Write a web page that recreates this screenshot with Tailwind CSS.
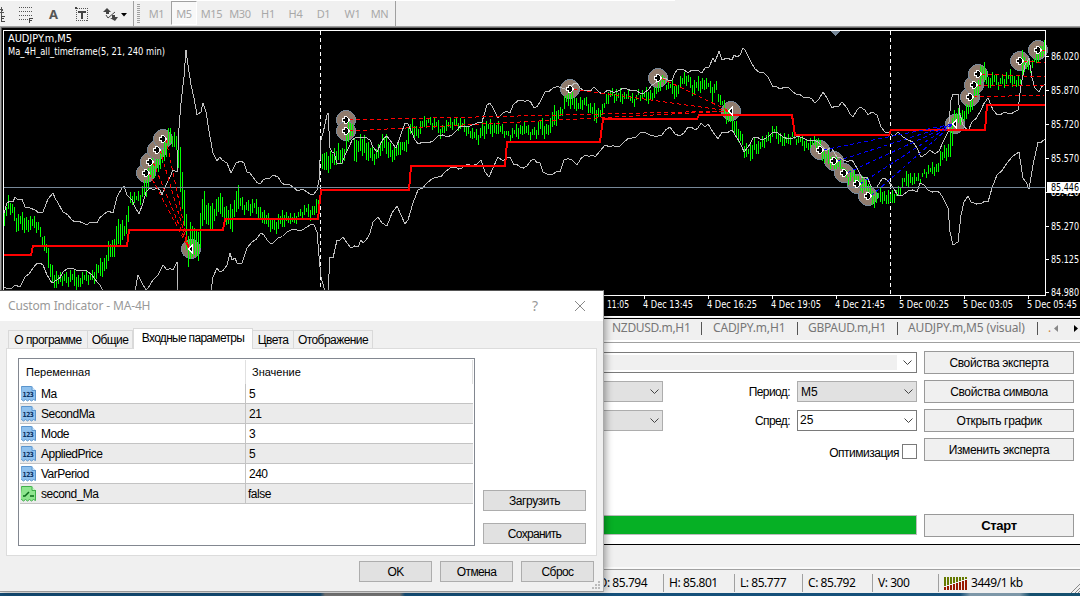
<!DOCTYPE html>
<html lang="ru">

<head>
    <meta charset="UTF-8" />
    <meta name="viewport" content="width=device-width, initial-scale=1.0" />
    <title>AUDJPY.m,M5</title>
    <script src="https://cdn.jsdelivr.net/npm/@tailwindcss/browser@4"></script>
</head>

<body class="relative w-[1080px] h-[596px] overflow-hidden flex flex-col bg-[#f0f0f0] text-black font-['Liberation_Sans',sans-serif] text-[11px] leading-none whitespace-nowrap">

    <!-- Toolbar -->
    <div class="h-[26px] shrink-0 flex items-center bg-[linear-gradient(90deg,#fff_675px,#f0f0f0_675px)] bg-[length:100%_1px] bg-no-repeat">
        <svg class="shrink-0" width="133" height="26" viewBox="0 0 133 26" shape-rendering="crispEdges">
            <path d="M0 9h3l-2 3h3M1 7v9" stroke="#555" fill="none" />
            <path d="M1 16.500h4M1 18.500h3M1 21.500h4M1.500 16v6" stroke="#444" fill="none" />
            <path d="M19 7.500h14M19 11.500h14M19 15.500h14M19 19.500h9" stroke="#555" stroke-dasharray="1 1" />
            <path d="M29.500 23v-5M29 18.500h4M29 20.500h3" stroke="#444" fill="none" />
            <rect x="76.500" y="8.500" width="11" height="12" fill="none" stroke="#555" stroke-dasharray="1 1" />
            <path d="M75 7h2v2h-2z" fill="#444" />
            <path d="M78 11.500h8M82 11v8" stroke="#444" stroke-width="2" />
            <g fill="#444" shape-rendering="auto">
                <path d="M107 8l4 4h-2v2h-3v-2h-3zM115 21l-5-3h2v-3h3v2h3z" />
                <path d="M106 15l2 3 7-6" stroke="#444" fill="none" />
                <path d="M121 13h6l-3 3.500z" fill="#000" />
            </g>
            <text x="49" y="19" font-size="13" font-weight="bold" fill="#555" font-family="Noto Sans">A</text>
        </svg>
        <div class="w-px h-[25px] bg-[#a0a0a0]"></div>
        <div class="ml-[3px] w-[3px] h-[19px] bg-[repeating-linear-gradient(#a0a0a0_0_1px,#f0f0f0_1px_2px)]"></div>
        <div class="ml-[2px] flex items-center text-[11px] font-['Noto_Sans',sans-serif] text-[#a8a8a8] tracking-[-0.3px]">
            <div class="w-[29px] pt-px text-center">M1</div>
            <div class="w-[26px] h-6 pt-px flex items-center justify-center border border-[#a0a0a0] border-r-white border-b-white bg-[#f8f8f8]">M5</div>
            <div class="w-[29px] pt-px text-center">M15</div>
            <div class="w-[28px] pt-px text-center">M30</div>
            <div class="w-[28px] pt-px text-center">H1</div>
            <div class="w-[27px] pt-px text-center">H4</div>
            <div class="w-[29px] pt-px text-center">D1</div>
            <div class="w-[29px] pt-px text-center">W1</div>
            <div class="w-[25px] pt-px text-center">MN</div>
        </div>
        <div class="ml-[3px] w-px h-[25px] bg-[#a0a0a0]"></div>
    </div>

    <!-- Chart -->
    <svg id="chart" class="shrink-0" width="1080" height="292" viewBox="0 26 1080 292" shape-rendering="crispEdges" font-family="DejaVu Sans Condensed, DejaVu Sans, sans-serif" font-size="10.500">
        <rect x="0" y="26" width="1080" height="292" fill="#000" />
        <path d="M0 26.500h1080" stroke="#a0a0a0" />
        <path d="M0 27.500h1080" stroke="#696969" />
        <path d="M0.500 27v290" stroke="#a0a0a0" />
        <path d="M1.500 28v289" stroke="#555" />
        <path d="M0 316.500h1080" stroke="#fff" />
        <path d="M0 317.500h1080" stroke="#f0f0f0" />
        <g id="rings" fill="#8f7b6d" stroke="#778899"></g>
        <path d="M320.500 31v264M890.500 31v264" stroke="#fff" stroke-dasharray="4 3" />
        <path id="bars" stroke="#00ff00" stroke-width="1" fill="none" />
        <path id="bands" stroke="#c0c0c0" fill="none" />
        <path d="M4 187.500h1041" stroke="#778899" />
        <path d="M4 255H31L33 246H127L129 230H223L225 219H318L321 190H409L411 166H505L507 142H600L603 119H697L699 115H792L795 135H889L891 130H985L987 105H1045" stroke="#f00" stroke-width="2" fill="none" />
        <path id="losses" stroke="#f00" stroke-dasharray="4 3" fill="none" />
        <path id="profits" stroke="#00f" stroke-dasharray="4 3" fill="none" />
        <g id="marks" fill="#000" stroke="#fff" stroke-width="1"></g>
        <path d="M831 31h9l-4.500 5z" fill="#778899" />
        <path d="M3.500 295V30.500H1045.500V295.500H3" stroke="#fff" fill="none" />
        <g fill="#fff" id="labels" shape-rendering="auto">
            <text x="8" y="42" textLength="64" lengthAdjust="spacingAndGlyphs">AUDJPY.m,M5</text>
            <text x="8" y="55" textLength="157" lengthAdjust="spacingAndGlyphs">Ma_4H_all_timeframe(5, 21, 240 min)</text>
            <text x="607" y="308" textLength="22" lengthAdjust="spacingAndGlyphs">11:05</text>
        </g>
    </svg>

    <!-- Chart tabs -->
    <div class="h-[24px] shrink-0 flex items-center border-t border-black bg-[#f0f0f0] pl-[612px] text-[12px] font-['Noto_Sans',sans-serif] text-[#777] shadow-[inset_0_-2px_0_#fff]">
        <div class="w-[78px] -mt-[5px] tracking-[-0.3px]">NZDUSD.m,H1</div>
        <div class="ml-[11px] -mt-1 w-px h-[13px] bg-[#555]"></div>
        <div class="ml-[11px] w-[74px] -mt-[5px] tracking-[-0.15px]">CADJPY.m,H1</div>
        <div class="ml-[10px] -mt-1 w-px h-[13px] bg-[#555]"></div>
        <div class="ml-[10px] w-[78px] -mt-[5px] tracking-[-0.3px]">GBPAUD.m,H1</div>
        <div class="ml-[11px] -mt-1 w-px h-[13px] bg-[#555]"></div>
        <div class="ml-[10px] w-[118px] -mt-[5px] tracking-[-0.15px]">AUDJPY.m,M5 (visual)</div>
        <div class="ml-[11px] -mt-1 w-px h-[13px] bg-[#555]"></div>
        <div class="ml-[10px] -mt-[5px] w-[6px] text-[#c84]">.</div>
        <svg class="-mt-[4px]" width="26" height="9" viewBox="0 0 26 9"><path d="M4 1v7l-4-3.500z" fill="#888" /><path d="M20 1v7l4-3.500z" fill="#000" /></svg>
    </div>

    <!-- Strategy tester -->
    <div class="h-[202px] shrink-0 flex border-t border-[#a0a0a0] bg-white text-[12px]">
        <div class="w-[917px] h-full flex flex-col pt-[9px]">
            <div class="h-[21px] border border-[#7a7a7a] flex items-center p-0.5">
                <div class="h-[15px] flex-1 bg-[#f0f0f0]"></div>
                <svg class="ml-1.5 mr-0.5" width="9" height="6" viewBox="0 0 9 6"><path d="M.5.5l4 4 4-4" stroke="#444" fill="none" /></svg>
            </div>
            <div class="mt-2 flex items-center">
                <div class="w-[663px] h-[21px] border border-[#adadad] bg-[#e1e1e1] flex items-center justify-end pr-[3px]">
                    <svg width="9" height="6" viewBox="0 0 9 6"><path d="M.5.5l4 4 4-4" stroke="#444" fill="none" /></svg>
                </div>
                <div class="flex-1 pr-[7px] text-right tracking-[-0.6px]">Период:</div>
                <div class="w-[120px] h-[21px] border border-[#adadad] bg-[#e1e1e1] flex items-center justify-between pl-[3px] pr-[3px]">M5
                    <svg width="9" height="6" viewBox="0 0 9 6"><path d="M.5.5l4 4 4-4" stroke="#444" fill="none" /></svg>
                </div>
            </div>
            <div class="mt-2 flex items-center">
                <div class="w-[663px] h-[21px] border border-[#adadad] bg-[#e1e1e1] flex items-center justify-end pr-[3px]">
                    <svg width="9" height="6" viewBox="0 0 9 6"><path d="M.5.5l4 4 4-4" stroke="#444" fill="none" /></svg>
                </div>
                <div class="flex-1 pr-[7px] text-right tracking-[-0.6px]">Спред:</div>
                <div class="w-[120px] h-[21px] border border-[#7a7a7a] bg-white flex items-center justify-between pl-0.5 pr-[3px]"><span class="-mt-0.5">25</span>
                    <svg width="9" height="6" viewBox="0 0 9 6"><path d="M.5.5l4 4 4-4" stroke="#444" fill="none" /></svg>
                </div>
            </div>
            <div class="mt-[12px] flex items-center justify-end">
                <span class="pt-1 pr-[3px] tracking-[-0.5px]">Оптимизация</span>
                <div class="w-[15px] h-[15px] border border-[#7a7a7a]"></div>
            </div>
            <div class="mt-[56px] h-[20px] border border-[#bcbcbc] bg-[#06b025]"></div>
        </div>
        <div class="ml-[7px] w-[150px] pt-2 flex flex-col gap-1.5 tracking-[-0.35px] [&>div]:h-[23px] [&>div]:border [&>div]:border-[#999] [&>div]:bg-[#f0f0f0] [&>div]:flex [&>div]:items-center [&>div]:justify-center">
            <div>Свойства эксперта</div>
            <div>Свойства символа</div>
            <div>Открыть график</div>
            <div>Изменить эксперта</div>
            <div class="mt-[47px] font-bold text-[13px]">Старт</div>
        </div>
    </div>
    <div class="h-[25px] shrink-0 border-t border-black bg-[#f0f0f0] shadow-[inset_0_-2px_0_#fafafa]"></div>

    <!-- Status bar -->
    <div class="h-[24px] shrink-0 flex items-center border-t border-[#a0a0a0] bg-[#f0f0f0] pl-[598px] pt-[3px] text-[12px] font-['Noto_Sans',sans-serif] tracking-[-0.45px]">
        <div class="w-[65px]">O: 85.794</div>
        <div class="w-[71px] h-[18px] flex items-center border-l border-[#a0a0a0] pl-[5px]">H: 85.801</div>
        <div class="w-[68px] h-[18px] flex items-center border-l border-[#a0a0a0] pl-[5px]">L: 85.777</div>
        <div class="w-[70px] h-[18px] flex items-center border-l border-[#a0a0a0] pl-[5px]">C: 85.792</div>
        <div class="w-[66px] h-[18px] flex items-center border-l border-[#a0a0a0] pl-[5px]">V: 300</div>
        <div class="flex-1 h-[18px] flex items-center border-l border-[#a0a0a0] pl-[5px]">
            <svg width="24" height="13" viewBox="0 0 24 13" shape-rendering="crispEdges">
                <path d="M1 0v9M4 0v8M7 0v7M10 0v6M13 0v5M16 0v4M19 0v3M22 0v2" stroke="#667a00" stroke-width="2" />
                <path d="M1 13v-3M4 13v-4M7 13v-5M10 13v-6M13 13v-7M16 13v-8M19 13v-9M22 13v-10" stroke="#991a00" stroke-width="2" />
            </svg>
            <span class="ml-[3px]">3449/1 kb</span>
        </div>
        <svg class="self-end" width="9" height="9" viewBox="0 0 9 9"><path d="M0 9l9-9M4 9l5-5M7 9l2-2" stroke="#888" /></svg>
    </div>
    <div class="h-[3px] bg-[linear-gradient(90deg,#134c75_0_320px,#777_325px_400px,#15507a_405px_960px,#7d97a8_970px_1020px,#15506f_1030px)]"></div>

    <!-- Indicator properties window -->
    <div class="absolute left-0 top-[290px] w-[604px] h-[302px] border border-l-0 border-[#555] border-b-[#999] border-r-[#aaa] bg-[#f0f0f0] shadow-[2px_0_7px_rgba(0,0,0,0.35)]">
        <div class="h-[30px] bg-white flex items-center pl-2 text-[#999] text-[12px] font-['Noto_Sans',sans-serif]">
            <div class="flex-1 tracking-[-0.15px]">Custom Indicator - MA-4H</div>
            <div class="text-[14px] w-[6px]">?</div>
            <svg class="ml-[36px] mr-[17px]" width="12" height="12" viewBox="0 0 12 12"><path d="M1 1l10 10M11 1l-10 10" stroke="#888" fill="none" /></svg>
        </div>
        <div class="mt-[7px] pl-2 h-[20px] flex items-end text-[12px] tracking-[-0.55px]">
            <div class="w-[80px] h-[18px] flex items-center justify-center border border-b-0 border-[#d9d9d9]">О программе</div>
            <div class="w-[45px] h-[18px] flex items-center justify-center border border-b-0 border-l-0 border-[#d9d9d9]">Общие</div>
            <div class="relative z-10 w-[120px] h-[21px] -mb-px pb-0.5 flex items-center justify-center border border-b-0 border-[#d9d9d9] bg-white tracking-[-0.7px]">Входные параметры</div>
            <div class="w-[41px] h-[18px] flex items-center justify-center border border-b-0 border-l-0 border-[#d9d9d9]">Цвета</div>
            <div class="w-[79px] h-[18px] flex items-center justify-center border border-b-0 border-l-0 border-[#d9d9d9]">Отображение</div>
        </div>
        <div class="ml-1.5 w-[591px] h-[208px] flex border border-[#dcdcdc] bg-white pl-[11px] pt-[9px]">
            <div class="w-[457px] h-[188px] border border-[#828790] px-px">
                <div class="h-[25px] pt-px flex">
                    <div class="w-[226px] h-6 flex items-center border-r border-[#e0e0e0] pl-[6px]">Переменная</div>
                    <div class="flex-1 h-6 flex items-center border-r border-[#e0e0e0] pl-[6px]">Значение</div>
                </div>
                <div id="params"></div>
            </div>
            <div class="ml-2 pt-[132px] flex flex-col gap-3 text-[12px]">
                <div class="w-[103px] h-[21px] flex items-center justify-center border border-[#adadad] bg-[#e1e1e1] tracking-[-0.4px]">Загрузить</div>
                <div class="w-[103px] h-[21px] flex items-center justify-center border border-[#adadad] bg-[#e1e1e1] tracking-[-0.7px]">Сохранить</div>
            </div>
        </div>
        <div class="mt-[5px] pl-[359px] flex gap-2 text-[12px] tracking-[-0.6px]">
            <div class="w-[73px] h-[21px] flex items-center justify-center border border-[#adadad] bg-[#e1e1e1]">OK</div>
            <div class="w-[73px] h-[21px] flex items-center justify-center border border-[#adadad] bg-[#e1e1e1]">Отмена</div>
            <div class="w-[73px] h-[21px] flex items-center justify-center border border-[#adadad] bg-[#e1e1e1]">Сброс</div>
        </div>
        <svg class="absolute right-[3px] bottom-[2px]" width="8" height="8" viewBox="0 0 8 8" fill="#bbb"><path d="M6 0h2v2h-2zM3 3h2v2h-2zM6 3h2v2h-2zM0 6h2v2h-2zM3 6h2v2h-2zM6 6h2v2h-2z" /></svg>
    </div>

    <script>
        // input rows
        const params = [['Ma', '5'], ['SecondMa', '21'], ['Mode', '3'], ['AppliedPrice', '5'], ['VarPeriod', '240'], ['second_Ma', 'false']];
        document.getElementById('params').innerHTML = params.map(([name, value], i) => {
            const flag = name === 'second_Ma';
            const icon = flag
                ? '<path d="M.5.5h10l4 4v10l-2-1-2 1.500-2-1.500-2 1.500-2-1.500-2 1.500-2-1.500-2 1z" fill="#8ee58e" stroke="#3fae4a"/><path d="M11 .5v4h4" fill="#c8f7c8" stroke="#3fae4a"/><path d="M2 10h2l4-4M9 10h4" stroke="#0a6a1a" stroke-width="1.500" fill="none"/>'
                : '<path d="M.5.5h10l4 4v10l-2-1-2 1.500-2-1.500-2 1.500-2-1.500-2 1.500-2-1.500-2 1z" fill="#8fc1ee" stroke="#5a94cc"/><path d="M11 .5v4h4" fill="#c9e3fa" stroke="#5a94cc"/><text x="1.500" y="11" font-size="7" font-weight="bold" fill="#0a3060" font-family="DejaVu Sans" textLength="11" lengthAdjust="spacingAndGlyphs">123</text>';
            return `<div class="h-[20px] flex items-center border-b border-[#c3c3c3] text-[12px] tracking-[-0.5px] ${i % 2 ? 'bg-[#ebebeb]' : 'bg-white'}">
                <div class="w-[226px] h-full flex items-center border-r border-[#c3c3c3] pl-px"><svg width="16" height="16" viewBox="0 0 16 16">${icon}</svg><span class="ml-1">${name}</span></div>
                <div class="${flag ? 'pl-[2px]' : 'pl-[3px]'}">${value}</div></div>`;
        }).join('');

        const set = (id, d) => document.getElementById(id).setAttribute('d', d);

        // price range: x, high, low
        const range = [
            4,213,225, 8,198,210, 13,205,217, 14,208,223, 17,217,232, 20,215,228, 27,217,230, 33,218,228, 38,222,233, 42,233,244,
            46,243,257, 48,252,267, 50,262,273, 52,265,282, 54,272,286, 57,273,287, 60,275,283, 67,273,285, 70,272,282, 77,275,288,
            83,274,282, 90,273,283, 95,267,280, 100,262,275, 105,257,270, 108,243,260, 113,243,257, 117,220,248, 121,220,240, 125,227,240,
            127,210,225, 130,192,203, 137,195,202, 140,193,203, 143,183,198, 147,173,193, 150,163,180, 155,160,173, 160,153,168, 165,143,160,
            167,128,150, 170,129,145, 173,133,143, 177,135,157, 179,128,177, 181,162,198, 183,182,220, 185,192,227, 187,240,270, 189,230,267,
            191,220,253, 193,227,257, 197,232,260, 199,223,255, 201,207,240, 203,188,220, 205,202,217, 207,203,223, 211,203,230, 214,208,223,
            218,195,210, 220,193,217, 224,203,220, 227,210,228, 232,207,228, 234,200,217, 236,188,210, 238,187,208, 240,197,208, 244,203,213,
            250,200,213, 255,202,212, 260,207,218, 267,215,227, 273,220,233, 280,215,228, 287,212,220, 293,217,225, 300,210,218, 303,207,215,
            310,208,217, 315,202,212, 319,198,210, 320,150,160, 324,153,173, 328,152,170, 332,153,167, 335,152,162, 338,143,160, 342,150,163,
            344,148,163, 346,130,152, 348,120,140, 352,125,138, 354,135,158, 356,142,162, 360,138,150, 364,135,153, 367,142,160, 370,147,160,
            374,152,163, 378,145,160, 381,135,150, 387,138,153, 392,147,160, 397,147,157, 400,140,153, 404,143,153, 407,133,147, 410,123,138,
            412,122,132, 417,127,137, 422,120,130, 427,118,125, 430,118,127, 435,120,128, 440,127,135, 445,122,130, 452,120,128, 457,118,127,
            462,122,130, 467,125,133, 472,130,138, 478,133,143, 482,122,138, 487,123,133, 492,123,133, 497,122,132, 502,127,135, 507,132,138,
            512,130,138, 517,127,135, 523,122,132, 530,130,138, 535,127,137, 540,120,133, 545,125,135, 550,120,132, 553,107,127, 558,110,122,
            562,105,113, 565,95,107, 568,92,105, 573,92,105, 577,103,112, 582,98,108, 587,98,108, 590,105,113, 593,107,121, 598,108,117,
            603,105,113, 606,97,105, 608,90,102, 612,89,98, 617,92,102, 625,92,98, 627,89,95, 630,95,103, 635,97,106, 638,90,97,
            643,93,100, 648,90,100, 653,90,98, 657,85,95, 662,75,85, 667,82,88, 672,83,93, 676,85,97, 680,78,87, 687,73,83,
            690,78,90, 693,83,95, 698,80,90, 704,77,88, 708,82,88, 712,85,100, 716,82,92, 720,97,105, 723,102,110, 727,110,123,
            730,108,120, 734,120,137, 738,127,140, 742,135,147, 744,142,155, 748,148,158, 750,147,160, 754,138,150, 758,143,153, 763,138,147,
            768,133,143, 773,127,135, 778,132,140, 783,135,145, 788,137,145, 792,132,140, 797,136,142, 802,138,145, 807,140,149, 812,140,145,
            817,136,147, 822,145,158, 824,153,163, 828,153,163, 833,157,167, 840,162,170, 847,173,182, 852,172,180, 857,175,185, 862,178,192,
            867,180,192, 870,185,198, 872,192,207, 877,192,202, 882,190,200, 887,192,202, 891,193,205, 895,192,200, 898,187,197, 902,180,188,
            908,172,183, 913,175,183, 920,177,182, 925,168,175, 930,167,173, 937,163,172, 940,153,165, 945,147,158, 949,143,160, 951,115,158,
            953,112,128, 957,112,122, 962,110,120, 967,105,117, 971,100,112, 973,90,103, 977,80,95, 980,68,85, 983,65,82, 986,68,80,
            988,77,88, 993,73,83, 998,80,88, 1003,75,85, 1010,73,82, 1017,78,85, 1020,78,86, 1021,52,85, 1024,55,70, 1027,62,73,
            1032,62,68, 1037,50,60, 1042,43,55, 1045,42,52];
        const jitter = [0, 3, -2, 1, -3, 2, 0, -1, 4, -2, 1, -4, 2];
        let d = '', k = 0;
        for (let x = 4; x < 1045; x += 2) {
            while (range[k + 3] < x) k += 3;
            const n = x / 2;
            const t = Math.min(1, (x - range[k]) / (range[k + 3] - range[k]));
            const hi = range[k + 1] + (range[k + 4] - range[k + 1]) * t + jitter[n % 13];
            const lo = range[k + 2] + (range[k + 5] - range[k + 2]) * t + jitter[n * 5 % 13];
            d += `M${x + .5} ${Math.round(hi)}V${Math.round(Math.max(lo, hi + 4))}`;
        }
        set('bars', d);

        // volatility bands
        const upper = [4,213, 7,203, 13,202, 15,197, 18,200, 22,199, 25,207, 30,208, 35,210, 39,213, 43,212, 48,199, 53,193, 55,198, 58,203, 63,212, 72,220,
            78,221, 83,223, 87,225, 93,222, 97,223, 103,215, 108,211, 113,213, 117,197, 122,188, 124,186, 127,195, 132,200, 135,207, 139,214, 143,203, 146,192,
            150,188, 157,188, 160,190, 162,195, 165,187, 170,177, 173,170, 177,172, 179,128, 181,103, 184,77, 186,50, 188,65, 191,85, 194,98, 197,115, 201,112,
            203,103, 206,112, 210,137, 213,153, 217,161, 220,157, 222,160, 227,163, 231,173, 236,163, 241,161, 244,163, 247,172, 253,177, 260,184, 267,178,
            273,175, 278,177, 285,185, 293,187, 300,190, 307,192, 314,194, 317,190, 319,180, 321,140, 323,133, 327,115, 328,113, 330,148, 332,152, 334,153,
            337,163, 342,163, 345,155, 350,145, 352,140, 360,138, 365,137, 370,140, 373,147, 377,152, 381,143, 387,136, 392,143, 396,148, 400,137, 405,123,
            408,124, 412,133, 418,144, 428,143, 438,136, 447,137, 457,130, 463,126, 477,123, 482,122, 487,105, 490,103, 493,108, 498,118, 503,113, 510,113,
            513,105, 522,100, 528,100, 534,108, 540,102, 545,92, 553,88, 562,88, 570,88, 577,83, 583,90, 588,91, 594,87, 598,91, 604,93, 610,91, 618,91,
            627,89, 632,91, 640,93, 648,90, 652,85, 657,82, 665,78, 672,80, 678,69, 683,69, 688,73, 692,70, 697,70, 702,73, 705,68, 709,67, 713,58, 715,62,
            719,51, 722,60, 727,58, 732,60, 734,55, 737,57, 740,55, 743,48, 745,50, 750,60, 755,69, 763,72, 768,77, 773,87, 780,89, 785,87, 792,91, 797,95,
            803,97, 808,97, 815,103, 823,92, 827,98, 832,108, 838,107, 842,102, 847,108, 853,117, 857,110, 860,107, 865,110, 868,115, 872,112, 877,115,
            881,127, 885,132, 892,135, 898,132, 903,137, 908,140, 913,142, 917,148, 921,157, 926,154, 930,150, 935,154, 939,151, 943,142, 948,132, 949,122,
            951,100, 953,94, 958,94, 960,115, 963,125, 968,131, 972,122, 980,112, 988,98, 991,105, 993,110, 1000,115, 1007,113, 1018,110, 1021,85, 1025,65,
            1029,58, 1032,78, 1035,88, 1039,92, 1045,84];
        // middle part of the lower band around the evening drop
        const middle = [813,140, 822,146, 826,151, 832,149, 837,157, 843,160, 852,160, 857,168, 862,178, 867,177, 872,188, 877,187, 882,179, 888,181, 893,187];
        const lower = [4,287, 12,288, 15,285, 20,287, 25,277, 33,268, 40,263, 43,265, 47,275, 52,283, 57,280, 63,272, 72,268, 82,270, 92,275, 97,282, 103,291,
            135,291, 138,275, 142,283, 146,290, 148,288, 153,280, 158,275, 163,265, 167,270, 173,270, 177,262, 178,292, 211,292, 213,277, 217,268, 220,272,
            227,265, 230,253, 232,260, 235,258, 237,263, 242,263, 247,248, 252,242, 261,233, 267,240, 273,243, 278,238, 287,232, 297,230, 307,227, 314,225,
            317,232, 320,267, 321,277, 325,291, 328,291, 330,257, 333,258, 337,240, 343,237, 347,243, 351,248, 358,247, 361,240, 363,243, 370,233, 373,222,
            378,217, 382,223, 387,226, 392,213, 397,206, 401,215, 405,224, 408,220, 413,203, 418,190, 427,183, 438,177, 445,172, 455,167, 462,168, 467,164,
            477,164, 481,160, 485,172, 489,177, 493,168, 498,157, 503,161, 510,157, 514,165, 520,167, 527,166, 534,159, 540,163, 543,172, 553,174, 560,172,
            564,160, 572,160, 577,165, 585,155, 593,155, 595,157, 600,151, 605,145, 610,147, 616,147, 623,143, 632,138, 640,133, 650,135, 662,135, 670,127,
            675,134, 680,136, 688,127, 695,130, 701,123, 705,127, 708,124, 713,132, 718,139, 722,132, 727,133, 732,130, 737,138, 744,152, 753,138, 762,140,
            773,132, 783,137, 793,138, 803,138, ...middle, 898,196, 908,191, 917,192, 920,183, 928,190, 937,191, 943,198, 948,208, 950,232, 953,245, 958,242,
            961,215, 964,202, 968,196, 971,202, 982,203, 988,202, 992,188, 997,175, 1007,163, 1019,152, 1023,178, 1029,189, 1033,165, 1038,142, 1045,139];
        const line = (p) => {
            let s = `M${p[0]} ${p[1]}`;
            for (let i = 2; i < p.length; i += 2) {
                // one small wobble between distant points
                if (p[i] - p[i - 2] > 5) s += `L${(p[i] + p[i - 2]) / 2} ${(p[i + 1] + p[i - 1]) / 2 + (i % 4 ? 1.5 : -1.5)}`;
                s += `L${p[i]} ${p[i + 1]}`;
            }
            return s;
        };
        set('bands', line(upper) + line(lower));

        // trades
        const entries = [[146, 173], [150, 162], [157, 150], [163, 139], [346, 120], [346, 131], [570, 89], [658, 78], [820, 150], [834, 161], [844, 173],
            [857, 184], [868, 196], [970, 97], [974, 85], [978, 74], [1020, 61], [1038, 50]];
        const exits = [[191, 249], [731, 111], [955, 124]];
        document.getElementById('rings').innerHTML = entries.concat(exits).map(([x, y]) => `<circle cx="${x}" cy="${y}" r="9.5"/>`).join('');
        document.getElementById('marks').innerHTML =
            entries.map(([x, y]) => `<path d="M${x - 3.5} ${y - 1.5}h2v-2h2l3 3.500-3 3.500h-2v-2h-2z"/>`).join('') +
            exits.map(([x, y]) => `<path d="M${x + 1.5} ${y - 4}v8l-4-4z"/>`).join('');
        const to = (list, e) => list.map(([x, y]) => `M${x + 3} ${y}L${e[0] - 2} ${e[1]}`).join('');
        set('losses', to(entries.slice(0, 4), exits[0]) + to(entries.slice(4, 8), exits[1]) +
            'M973 97L1045 95M977 85L1045 85M981 74L1045 77M1023 61L1045 63M1041 50H1045');
        set('profits', to(entries.slice(8, 13), exits[2]));

        // axes
        let t = '', ticks = '';
        [['86.020', 56], ['85.870', 90], ['85.720', 124], ['85.570', 158], ['85.420', 192], ['85.270', 226], ['85.125', 259], ['84.980', 292]].forEach(([v, y]) => {
            t += `<text x="1051" y="${y + 4}" textLength="28" lengthAdjust="spacingAndGlyphs">${v}</text>`;
            ticks += `M1046 ${y + .5}h3`;
        });
        ['4 Dec 13:45', '4 Dec 16:25', '4 Dec 19:05', '4 Dec 21:45', '5 Dec 00:25', '5 Dec 03:05', '5 Dec 05:45'].forEach((v, i) => {
            t += `<text x="${643 + i * 64}" y="308" textLength="50" lengthAdjust="spacingAndGlyphs">${v}</text>`;
            ticks += `M${644.5 + i * 64} 296v3`;
        });
        t += `<path d="${ticks}" stroke="#fff" shape-rendering="crispEdges"/><rect x="1047" y="182" width="33" height="11"/><text x="1051" y="191" fill="#000" textLength="28" lengthAdjust="spacingAndGlyphs">85.446</text>`;
        document.getElementById('labels').innerHTML += t;
    </script>
</body>

</html>
